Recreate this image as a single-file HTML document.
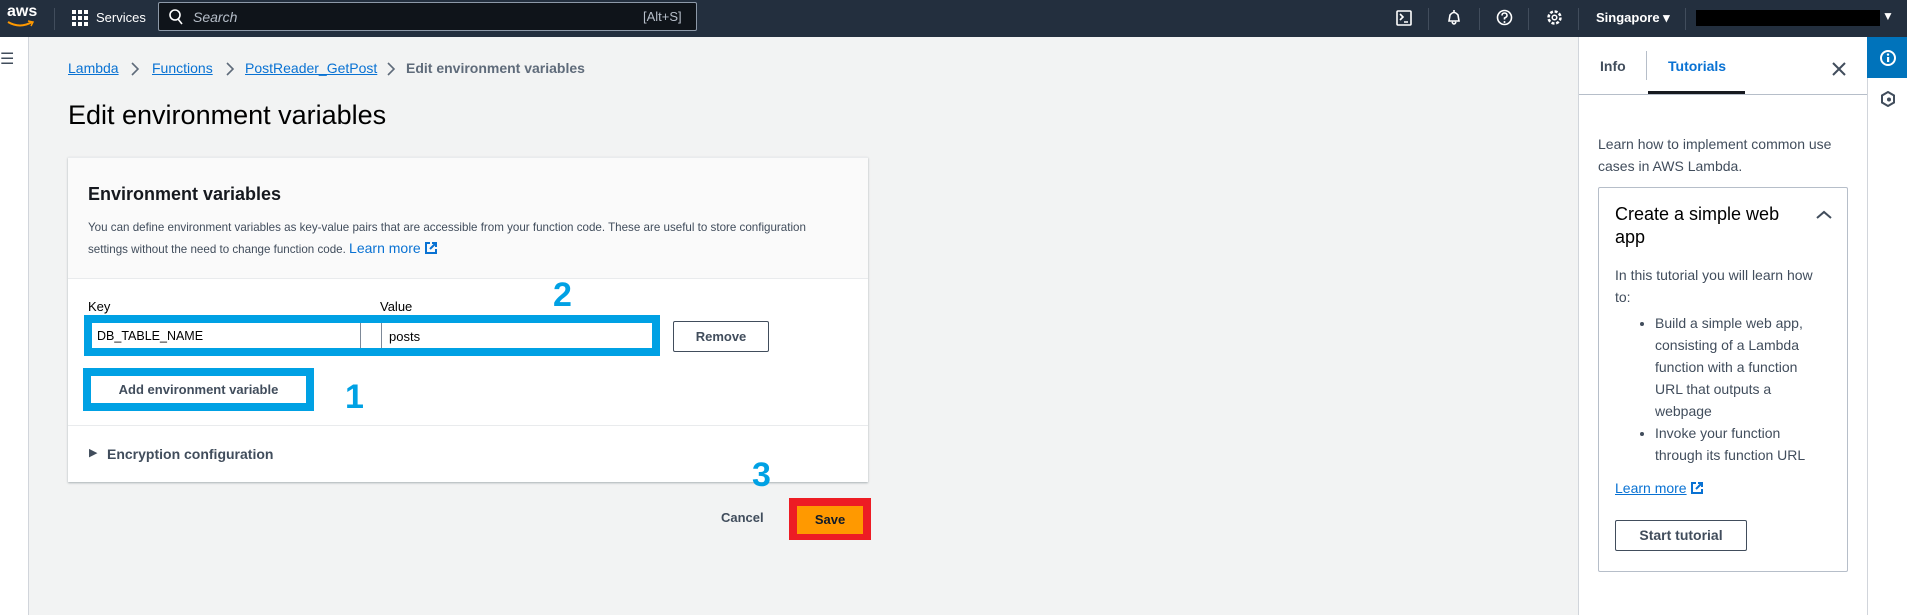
<!DOCTYPE html>
<html><head><meta charset="utf-8"><style>
*{box-sizing:border-box;margin:0;padding:0}
body{width:1907px;height:615px;overflow:hidden;background:#f2f3f3;font-family:"Liberation Sans",sans-serif;position:relative;color:#16191f}
.a{position:absolute;white-space:nowrap}
.hdr{left:0;top:0;width:1907px;height:37px;background:#232f3e}
.lnk{color:#0972d3;text-decoration:underline}
.bc{font-size:14px;top:60px}
.sep{width:1px;height:22px;background:#414d5c;top:8px}
.n{color:#00a1e4;font-weight:bold;font-size:34px}
.t{font-size:14px;color:#414d5c}
ul{list-style:disc;padding-left:40px;line-height:22px;white-space:normal}
</style></head><body>
<div class="a hdr"></div>
<div class="a" style="left:7px;top:3px;color:#fff;font-size:16px;font-weight:bold">aws</div>
<svg class="a" style="left:7px;top:20px" width="28" height="8"><path d="M1 2 Q13 9 25 2" stroke="#f90" stroke-width="2" fill="none"/><path d="M21 1 L26 2 L24 6" stroke="#f90" stroke-width="1.5" fill="none"/></svg>
<div class="a sep" style="left:54px"></div>
<svg class="a" style="left:72px;top:10px" width="16" height="16" fill="#fff"><rect x="0" y="0" width="4" height="4"/><rect x="6" y="0" width="4" height="4"/><rect x="12" y="0" width="4" height="4"/><rect x="0" y="6" width="4" height="4"/><rect x="6" y="6" width="4" height="4"/><rect x="12" y="6" width="4" height="4"/><rect x="0" y="12" width="4" height="4"/><rect x="6" y="12" width="4" height="4"/><rect x="12" y="12" width="4" height="4"/></svg>
<div class="a" style="left:96px;top:10px;color:#fff;font-size:13px">Services</div>
<div class="a" style="left:158px;top:2px;width:539px;height:29px;background:#0f141a;border:1px solid #8d99a8;border-radius:2px"></div>
<svg class="a" style="left:169px;top:9px" width="14" height="16"><circle cx="6" cy="6" r="5" stroke="#fff" stroke-width="1.6" fill="none"/><path d="M9 10 L13 15" stroke="#fff" stroke-width="1.6"/></svg>
<div class="a" style="left:193px;top:9px;color:#b6bec9;font-size:14px;font-style:italic">Search</div>
<div class="a" style="left:643px;top:9px;color:#b6bec9;font-size:13px">[Alt+S]</div>
<svg class="a" style="left:1396px;top:10px" width="16" height="16"><rect x="1" y="1" width="14" height="14" stroke="#fff" stroke-width="1.6" fill="none" rx="1"/><path d="M4 4 L7 7 L4 10 M8 12 H12" stroke="#fff" stroke-width="1.6" fill="none"/></svg>
<div class="a sep" style="left:1428px"></div>
<svg class="a" style="left:1446px;top:9px" width="16" height="17"><path d="M8 1 L8 3 M3 12 L4 6 Q8 1 12 6 L13 12 Z M6 13 Q8 17 10 13" stroke="#fff" stroke-width="1.6" fill="none"/></svg>
<div class="a sep" style="left:1479px"></div>
<svg class="a" style="left:1496px;top:9px" width="17" height="17"><circle cx="8.5" cy="8.5" r="7" stroke="#fff" stroke-width="1.6" fill="none"/><path d="M6 6.5 Q6 4 8.5 4 Q11 4 11 6.5 Q11 8 8.5 9 V10.5" stroke="#fff" stroke-width="1.6" fill="none"/><circle cx="8.5" cy="13" r="1" fill="#fff"/></svg>
<div class="a sep" style="left:1528px"></div>
<svg class="a" style="left:1546px;top:9px" width="17" height="17"><circle cx="8.5" cy="8.5" r="6" stroke="#fff" stroke-width="2.5" fill="none" stroke-dasharray="3 1.7"/><circle cx="8.5" cy="8.5" r="2.3" stroke="#fff" stroke-width="1.5" fill="none"/></svg>
<div class="a sep" style="left:1578px"></div>
<div class="a" style="left:1596px;top:10px;color:#fff;font-size:13px;font-weight:bold">Singapore ▾</div>
<div class="a sep" style="left:1685px"></div>
<div class="a" style="left:1696px;top:10px;width:184px;height:16px;background:#000"></div>
<div class="a" style="left:1882px;top:9px;color:#fff;font-size:12px">▼</div>

<div class="a" style="left:0;top:37px;width:29px;height:578px;background:#fff;border-right:1px solid #d1d5db"></div>
<div class="a" style="left:0;top:49px;font-size:16px;color:#414d5c">☰</div>

<div class="a bc" style="left:68px"><span class="lnk">Lambda</span></div>
<svg class="a" style="left:130px;top:62px" width="10" height="14"><path d="M2 1 L8 7 L2 13" stroke="#5f6b7a" stroke-width="1.6" fill="none"/></svg>
<div class="a bc" style="left:152px"><span class="lnk">Functions</span></div>
<svg class="a" style="left:225px;top:62px" width="10" height="14"><path d="M2 1 L8 7 L2 13" stroke="#5f6b7a" stroke-width="1.6" fill="none"/></svg>
<div class="a bc" style="left:245px"><span class="lnk">PostReader_GetPost</span></div>
<svg class="a" style="left:386px;top:62px" width="10" height="14"><path d="M2 1 L8 7 L2 13" stroke="#5f6b7a" stroke-width="1.6" fill="none"/></svg>
<div class="a bc" style="left:406px;color:#5f6b7a;font-weight:bold">Edit environment variables</div>
<div class="a" style="left:68px;top:100px;font-size:27px;color:#000">Edit environment variables</div>

<div class="a" style="left:68px;top:157px;width:800px;height:325px;background:#fff;box-shadow:0 1px 2px rgba(0,28,36,.3);border-top:1px solid #e9ebed"></div>
<div class="a" style="left:68px;top:158px;width:800px;height:121px;background:#fafafa;border-bottom:1px solid #e9ebed"></div>
<div class="a" style="left:88px;top:184px;font-size:18px;font-weight:bold">Environment variables</div>
<div class="a" style="left:88px;top:218px;font-size:11.6px;color:#414d5c;line-height:20px">You can define environment variables as key-value pairs that are accessible from your function code. These are useful to store configuration<br>settings without the need to change function code. <span style="color:#0972d3;font-size:14px">Learn more</span> <svg width="14" height="14" style="vertical-align:-2px"><path d="M6 2 H2 V12 H12 V8 M8 2 H12 V6 M12 2 L6 8" stroke="#0972d3" stroke-width="2" fill="none"/></svg></div>
<div class="a" style="left:88px;top:299px;font-size:13px;color:#000">Key</div>
<div class="a" style="left:380px;top:299px;font-size:13px;color:#000">Value</div>
<div class="a n" style="left:553px;top:276px">2</div>
<div class="a" style="left:84px;top:315px;width:576px;height:41px;border:8px solid #00a1e4"></div>
<div class="a" style="left:92px;top:323px;width:269px;height:25px;background:#fff;border-right:1px solid #7d8998"></div>
<div class="a" style="left:361px;top:323px;width:21px;height:25px;background:#fff;border-right:1px solid #7d8998"></div>
<div class="a" style="left:97px;top:329px;font-size:12.5px;color:#000">DB_TABLE_NAME</div>
<div class="a" style="left:389px;top:329px;font-size:13px;color:#000">posts</div>
<div class="a" style="left:673px;top:321px;width:96px;height:31px;border:1px solid #414d5c;border-radius:2px;font-size:13px;font-weight:bold;color:#414d5c;text-align:center;line-height:29px">Remove</div>
<div class="a" style="left:83px;top:368px;width:231px;height:43px;border:8px solid #00a1e4;background:#fff;font-size:13px;font-weight:bold;color:#414d5c;text-align:center;line-height:27px">Add environment variable</div>
<div class="a n" style="left:345px;top:378px">1</div>
<div class="a" style="left:68px;top:425px;width:800px;height:1px;background:#e9ebed"></div>
<div class="a" style="left:89px;top:446px;font-size:11px;color:#414d5c">▶</div>
<div class="a" style="left:107px;top:446px;font-size:14px;font-weight:bold;color:#414d5c">Encryption configuration</div>
<div class="a n" style="left:752px;top:456px">3</div>
<div class="a" style="left:721px;top:510px;font-size:13px;font-weight:bold;color:#414d5c">Cancel</div>
<div class="a" style="left:789px;top:498px;width:82px;height:42px;background:#ed1c24"></div>
<div class="a" style="left:797px;top:506px;width:66px;height:28px;background:#ff9900;font-size:13px;font-weight:bold;text-align:center;line-height:28px;color:#0f1b2a">Save</div>

<div class="a" style="left:1578px;top:37px;width:289px;height:578px;background:#fff;border-left:1px solid #d1d5db"></div>
<div class="a" style="left:1600px;top:58px;font-size:14px;font-weight:bold;color:#414d5c">Info</div>
<div class="a" style="left:1646px;top:51px;width:1px;height:29px;background:#b6bec9"></div>
<div class="a" style="left:1668px;top:58px;font-size:14px;font-weight:bold;color:#0972d3">Tutorials</div>
<div class="a" style="left:1648px;top:91px;width:97px;height:3px;background:#16191f"></div>
<svg class="a" style="left:1832px;top:62px" width="14" height="14"><path d="M1 1 L13 13 M13 1 L1 13" stroke="#414d5c" stroke-width="2"/></svg>
<div class="a" style="left:1579px;top:94px;width:288px;height:1px;background:#b6bec9"></div>
<div class="a t" style="left:1598px;top:133px;line-height:22px">Learn how to implement common use<br>cases in AWS Lambda.</div>
<div class="a" style="left:1598px;top:187px;width:250px;height:385px;border:1px solid #b6bec9;border-radius:2px"></div>
<div class="a" style="left:1615px;top:203px;font-size:18px;line-height:23px;color:#000">Create a simple web<br>app</div>
<svg class="a" style="left:1816px;top:210px" width="16" height="10"><path d="M1 8 L8 2 L15 8" stroke="#414d5c" stroke-width="2" fill="none"/></svg>
<div class="a t" style="left:1615px;top:264px;line-height:22px">In this tutorial you will learn how<br>to:</div>
<div class="a t" style="left:1615px;top:312px;width:205px"><ul><li>Build a simple web app, consisting of a Lambda function with a function URL that outputs a webpage</li><li>Invoke your function through its function URL</li></ul></div>
<div class="a" style="left:1615px;top:480px;font-size:14px;color:#0972d3"><span style="text-decoration:underline">Learn more</span> <svg width="14" height="14" style="vertical-align:-2px"><path d="M6 2 H2 V12 H12 V8 M8 2 H12 V6 M12 2 L6 8" stroke="#0972d3" stroke-width="2" fill="none"/></svg></div>
<div class="a" style="left:1615px;top:520px;width:132px;height:31px;border:1px solid #414d5c;border-radius:2px;font-size:14px;font-weight:bold;color:#414d5c;text-align:center;line-height:29px">Start tutorial</div>

<div class="a" style="left:1867px;top:37px;width:40px;height:578px;background:#fff;border-left:1px solid #d1d5db"></div>
<div class="a" style="left:1867px;top:37px;width:40px;height:41px;background:#0073bb"></div>
<svg class="a" style="left:1880px;top:50px" width="16" height="16"><circle cx="8" cy="8" r="7" fill="none" stroke="#fff" stroke-width="2"/><rect x="7" y="7" width="2.2" height="5" fill="#fff"/><circle cx="8" cy="4.6" r="1.2" fill="#fff"/></svg>
<svg class="a" style="left:1881px;top:91px" width="14" height="16"><path d="M7 1 L13 4.5 V11.5 L7 15 L1 11.5 V4.5 Z" fill="none" stroke="#414d5c" stroke-width="2"/><circle cx="8" cy="8.5" r="2" fill="#414d5c"/></svg>
</body></html>
